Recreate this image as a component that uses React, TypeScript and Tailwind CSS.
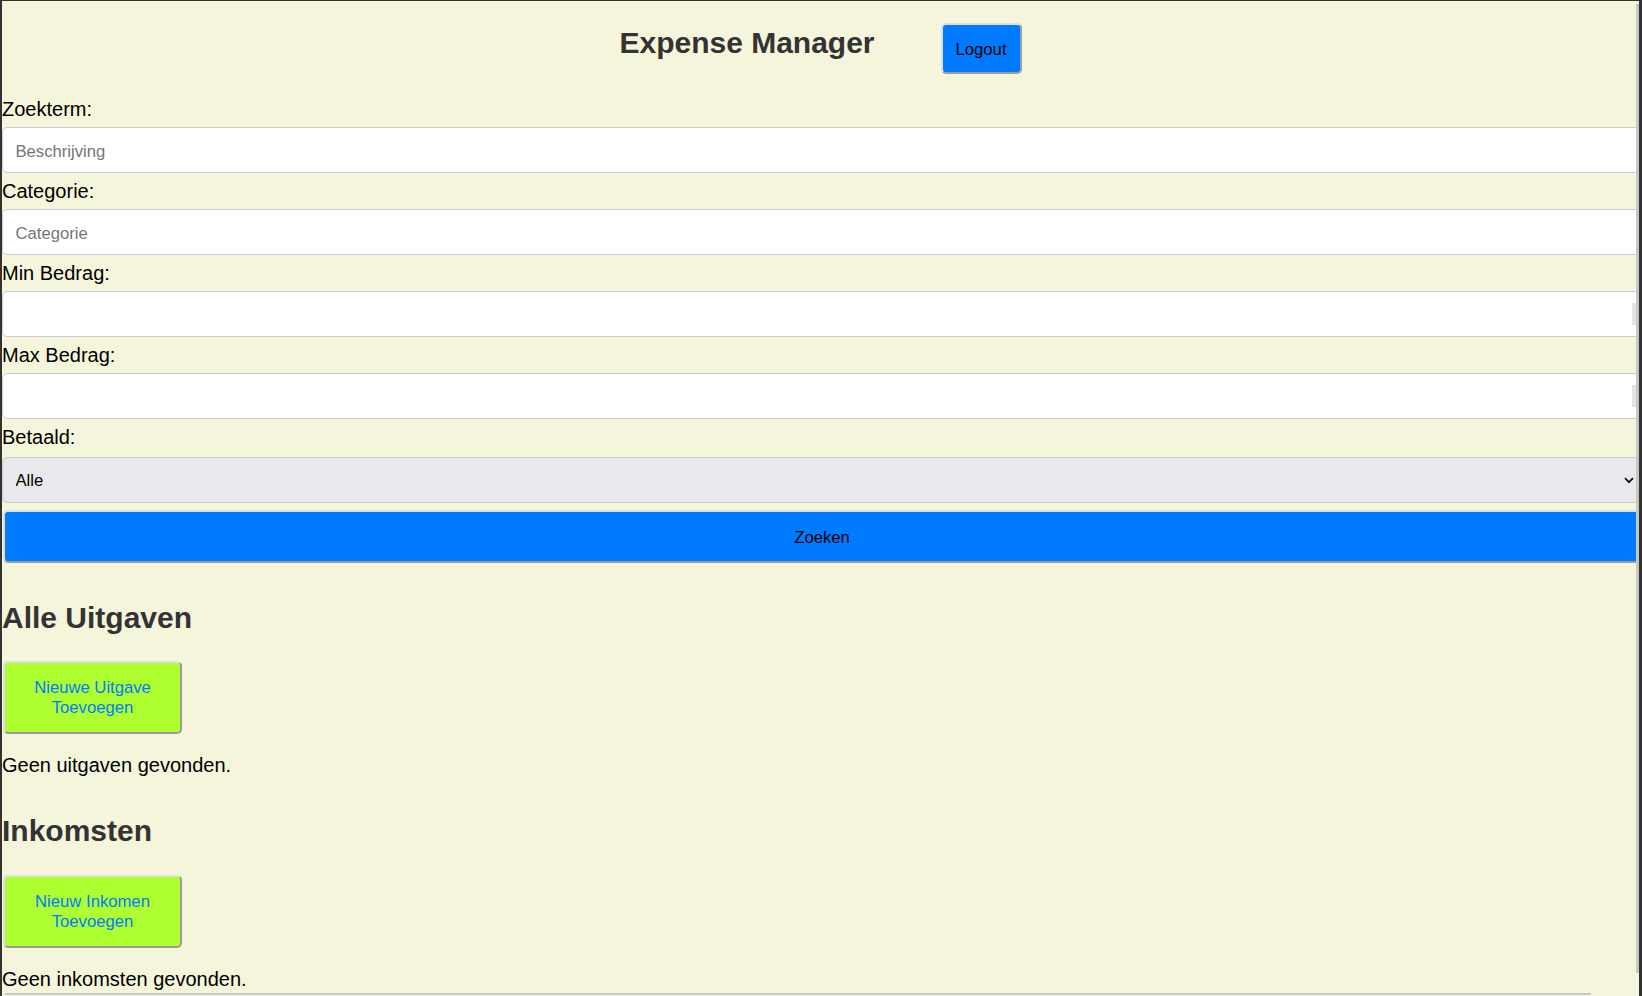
import React from "react";

const outset =
  "border-2 border-t-[#dedede] border-l-[#dedede] border-r-[#9c9c9c] border-b-[#9c9c9c]";

function Field({ label, placeholder, number }: { label: string; placeholder?: string; number?: boolean }) {
  return (
    <div>
      <label className="block text-[20px] leading-[23px] text-black">{label}</label>
      <div className="relative">
        <input
          type={number ? "number" : "text"}
          placeholder={placeholder}
          className="block mt-[6px] mb-[7px] h-[46px] w-[calc(100%+27px)] rounded-[5px] border border-[#cccccc] bg-white px-[12.5px] pt-[4px] pb-0 text-[16.67px] text-black outline-none placeholder:text-[#757575] [appearance:textfield]"
        />
        {number && (
          <div className="absolute right-[3px] top-[12px] h-[22px] w-[4px] bg-[#e4e4e4]" />
        )}
      </div>
    </div>
  );
}

export default function App() {
  return (
    <div className="w-[1642px] h-[996px] bg-[#323232] pl-[2px] pt-px pr-[3px] overflow-hidden font-['Liberation_Sans',Arial,sans-serif]">
      <div className="relative h-full bg-[#f5f5dc] overflow-hidden">
        <header className="flex justify-center items-start gap-[66px] pt-[22px] pb-[24px]">
          <h1 className="mt-[3px] text-[30px] leading-[34.5px] font-bold text-[#333333]">Expense Manager</h1>
          <button
            className={`w-[81px] h-[51px] pt-[2px] rounded-[5px] bg-[#007bff] text-[16.67px] text-black ${outset}`}
          >
            Logout
          </button>
        </header>

        <form onSubmit={(e) => e.preventDefault()}>
          <Field label="Zoekterm:" placeholder="Beschrijving" />
          <Field label="Categorie:" placeholder="Categorie" />
          <Field label="Min Bedrag:" number />
          <Field label="Max Bedrag:" number />
          <div>
            <label className="block text-[20px] leading-[23px] text-black">Betaald:</label>
            <div className="relative mt-[8px]">
              <select className="block h-[46px] w-full appearance-none rounded-[5px] border border-[#cccccc] bg-[#e9e9ed] px-[12.5px] text-[16.67px] text-black outline-none">
                <option>Alle</option>
                <option>Ja</option>
                <option>Nee</option>
              </select>
              <svg
                className="pointer-events-none absolute right-[5px] top-[20px]"
                width="10"
                height="7"
                viewBox="0 0 10 7"
              >
                <path d="M1 1.2 L5 5.2 L9 1.2" fill="none" stroke="#111" strokeWidth="1.8" />
              </svg>
            </div>
          </div>
          <button
            type="submit"
            className={`block ml-px mt-[7px] h-[53px] w-[calc(100%+1px)] pt-[2px] rounded-[5px] bg-[#007bff] text-[16.67px] text-black ${outset}`}
          >
            Zoeken
          </button>
        </form>

        <section>
          <h2 className="mt-[38px] text-[30px] leading-[34px] font-bold text-[#333333]">Alle Uitgaven</h2>
          <button
            className={`block ml-px mt-[26px] w-[179px] h-[73px] px-[15px] rounded-[5px] bg-[#adff2f] text-[16.67px] leading-[20px] text-[#007bff] ${outset}`}
          >
            Nieuwe Uitgave Toevoegen
          </button>
          <p className="mt-[20px] text-[20px] leading-[23px] text-black">Geen uitgaven gevonden.</p>
        </section>

        <section>
          <h2 className="mt-[37px] text-[30px] leading-[34px] font-bold text-[#333333]">Inkomsten</h2>
          <button
            className={`block ml-px mt-[27px] w-[179px] h-[73px] px-[15px] rounded-[5px] bg-[#adff2f] text-[16.67px] leading-[20px] text-[#007bff] ${outset}`}
          >
            Nieuw Inkomen Toevoegen
          </button>
          <p className="mt-[20px] text-[20px] leading-[23px] text-black">Geen inkomsten gevonden.</p>
        </section>

        <div className="absolute right-0 top-[3px] h-[969px] w-[3px] bg-[#c6c6c6]" />
        <div className="absolute left-[3px] bottom-[1px] h-[2px] w-[1586px] bg-[#c8c8c8]" />
      </div>
    </div>
  );
}
